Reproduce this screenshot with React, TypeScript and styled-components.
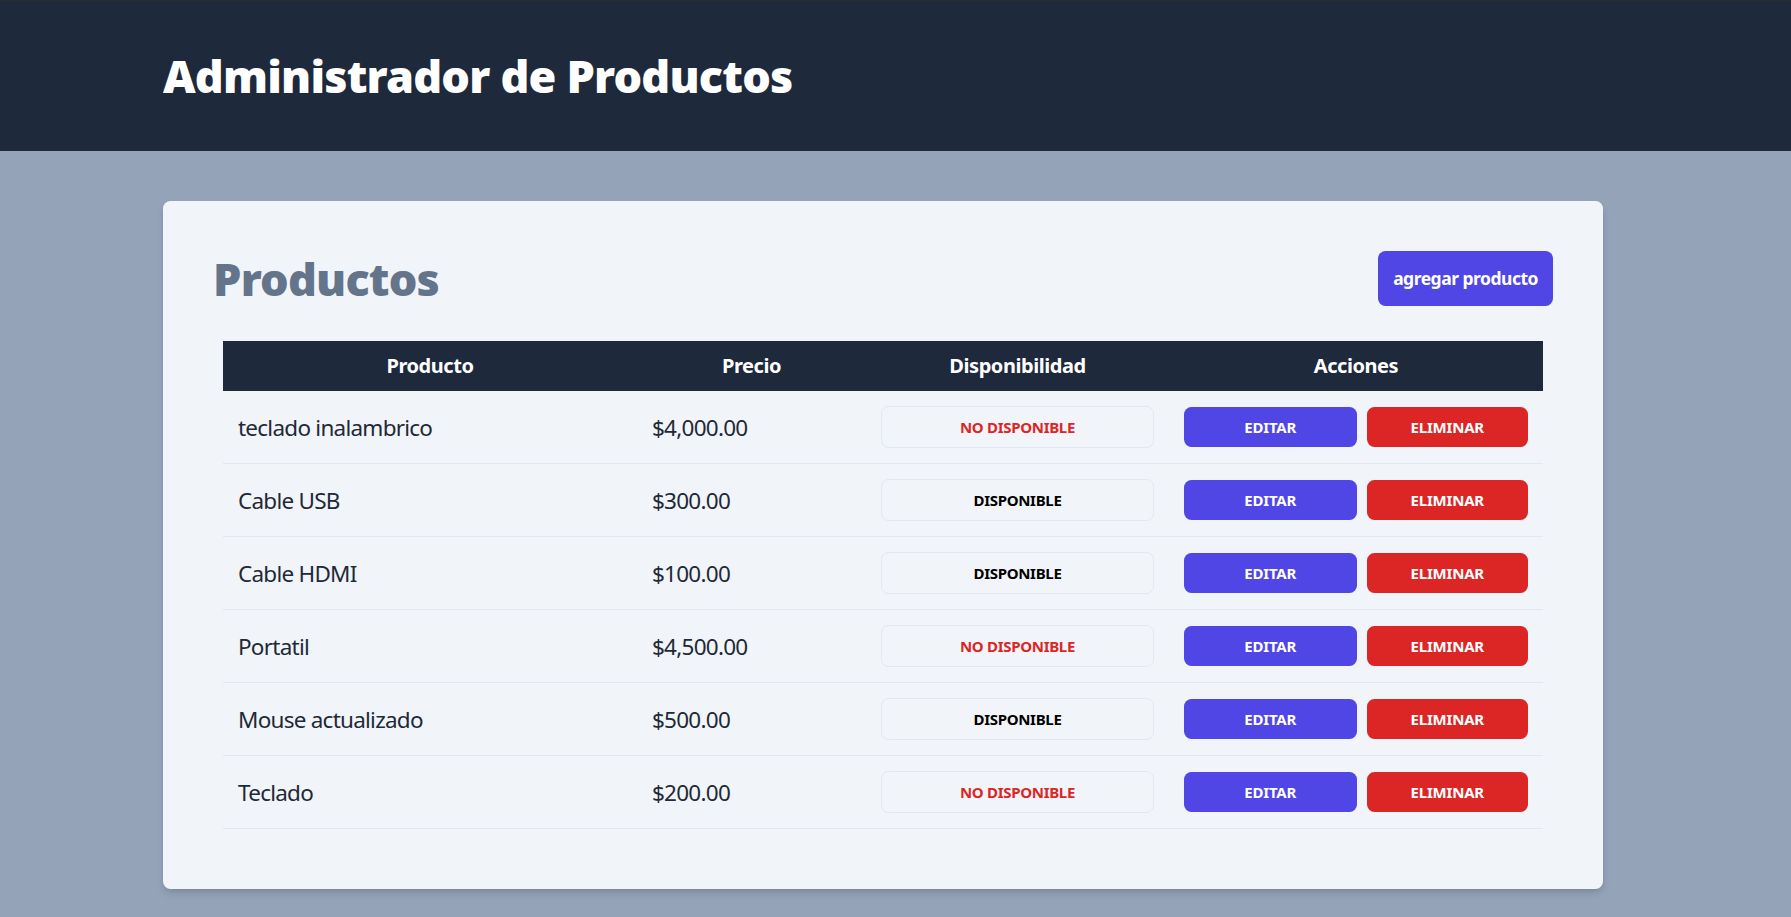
import React from "react";
import styled, { createGlobalStyle } from "styled-components";

const GlobalStyle = createGlobalStyle`
  * {
    box-sizing: border-box;
  }

  html,
  body {
    margin: 0;
    padding: 0;
    background: #94a3b8;
    font-family: "Noto Sans", "Open Sans", sans-serif;
  }
`;

const Page = styled.div`
  min-height: 100vh;
  background: #94a3b8;
`;

const Header = styled.header`
  background: #1e293b;
  border-top: 1px solid #2a2b2e;
  padding: 50px 0 50px 163px;
`;

const HeaderTitle = styled.h1`
  margin: 0;
  font-size: 45px;
  line-height: 50px;
  font-weight: 900;
  letter-spacing: -0.8px;
  color: #ffffff;
`;

const Main = styled.main`
  padding: 50px 0 0 163px;
`;

const Card = styled.section`
  width: 1440px;
  padding: 50px;
  background: #f1f5f9;
  border-radius: 7.5px;
  box-shadow: 0 5px 8px -1px rgba(0, 0, 0, 0.12), 0 2px 5px -2px rgba(0, 0, 0, 0.1);
`;

const CardHead = styled.div`
  display: flex;
  align-items: center;
  justify-content: space-between;
`;

const CardTitle = styled.h2`
  margin: 0;
  font-size: 45px;
  line-height: 50px;
  font-weight: 900;
  letter-spacing: -0.8px;
  color: #64748b;
`;

const AddButton = styled.button`
  border: none;
  padding: 15px;
  border-radius: 7.5px;
  background: #4f46e5;
  color: #ffffff;
  font-family: inherit;
  font-size: 17.5px;
  line-height: 25px;
  font-weight: 700;
  letter-spacing: -0.5px;
  cursor: pointer;
`;

const TableWrap = styled.div`
  margin-top: 25px;
  padding: 10px;
`;

const Table = styled.table`
  width: 100%;
  table-layout: fixed;
  border-collapse: collapse;
`;

const HeadRow = styled.tr`
  background: #1e293b;
`;

const Th = styled.th<{ $w: number }>`
  width: ${({ $w }) => $w}px;
  padding: 10px;
  color: #ffffff;
  font-size: 20px;
  line-height: 30px;
  font-weight: 700;
  letter-spacing: -0.45px;
  text-align: center;
`;

const Row = styled.tr`
  border-bottom: 1.25px solid #e2e8f0;
`;

const Td = styled.td`
  padding: 15px;
  font-size: 22.5px;
  line-height: 35px;
  letter-spacing: -0.75px;
  color: #1f2937;
  vertical-align: middle;
`;

const Status = styled.button<{ $available: boolean }>`
  width: 100%;
  padding: 10px;
  border: 1.25px solid #e2e8f0;
  border-radius: 7.5px;
  background: transparent;
  font-family: inherit;
  font-size: 15px;
  line-height: 20px;
  font-weight: 700;
  letter-spacing: -0.3px;
  text-transform: uppercase;
  color: ${({ $available }) => ($available ? "#000000" : "#dc2626")};
  cursor: pointer;
`;

const Actions = styled.div`
  display: grid;
  grid-template-columns: 172fr 161fr;
  gap: 10px;
  align-items: center;
`;

const ActionButton = styled.button<{ $variant: "edit" | "delete" }>`
  width: 100%;
  padding: 10px;
  border: none;
  border-radius: 7.5px;
  background: ${({ $variant }) => ($variant === "edit" ? "#4f46e5" : "#dc2626")};
  color: #ffffff;
  font-family: inherit;
  font-size: 15px;
  line-height: 20px;
  font-weight: 700;
  letter-spacing: -0.2px;
  text-transform: uppercase;
  cursor: pointer;
`;

type Product = {
  id: number;
  name: string;
  price: number;
  available: boolean;
};

const products: Product[] = [
  { id: 1, name: "teclado inalambrico", price: 4000, available: false },
  { id: 2, name: "Cable USB", price: 300, available: true },
  { id: 3, name: "Cable HDMI", price: 100, available: true },
  { id: 4, name: "Portatil", price: 4500, available: false },
  { id: 5, name: "Mouse actualizado", price: 500, available: true },
  { id: 6, name: "Teclado", price: 200, available: false },
];

const formatCurrency = (amount: number) =>
  new Intl.NumberFormat("en-US", { style: "currency", currency: "USD" }).format(amount);

const ProductRow: React.FC<{ product: Product }> = ({ product }) => (
  <Row>
    <Td>{product.name}</Td>
    <Td>{formatCurrency(product.price)}</Td>
    <Td>
      <Status $available={product.available}>
        {product.available ? "Disponible" : "No Disponible"}
      </Status>
    </Td>
    <Td>
      <Actions>
        <ActionButton $variant="edit">Editar</ActionButton>
        <ActionButton $variant="delete">Eliminar</ActionButton>
      </Actions>
    </Td>
  </Row>
);

export default function App() {
  return (
    <Page>
      <GlobalStyle />
      <Header>
        <HeaderTitle>Administrador de Productos</HeaderTitle>
      </Header>
      <Main>
        <Card>
          <CardHead>
            <CardTitle>Productos</CardTitle>
            <AddButton>agregar producto</AddButton>
          </CardHead>
          <TableWrap>
            <Table>
              <thead>
                <HeadRow>
                  <Th $w={414}>Producto</Th>
                  <Th $w={229}>Precio</Th>
                  <Th $w={303}>Disponibilidad</Th>
                  <Th $w={374}>Acciones</Th>
                </HeadRow>
              </thead>
              <tbody>
                {products.map((p) => (
                  <ProductRow key={p.id} product={p} />
                ))}
              </tbody>
            </Table>
          </TableWrap>
        </Card>
      </Main>
    </Page>
  );
}
